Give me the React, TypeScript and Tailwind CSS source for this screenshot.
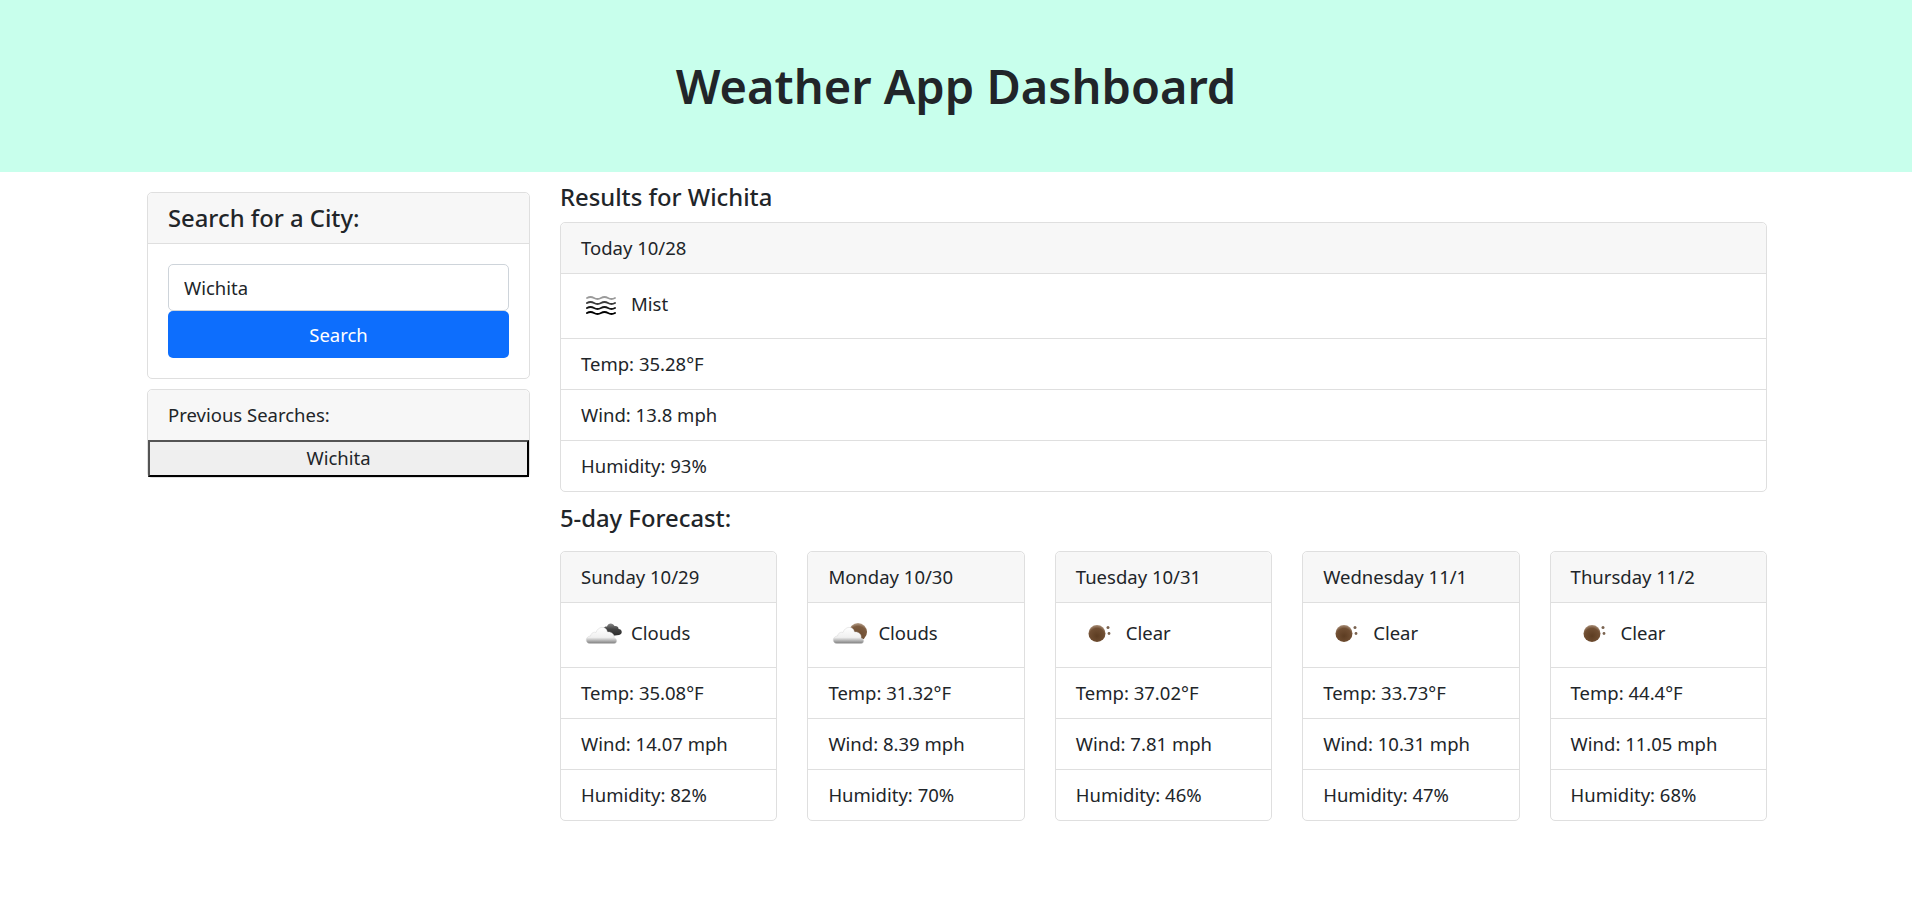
import { useId } from 'react';

interface DayWeather {
  label: string;
  icon: 'mist' | 'darkClouds' | 'sunClouds' | 'clear';
  description: string;
  temp: string;
  wind: string;
  humidity: string;
}

const TODAY: DayWeather = {
  label: 'Today 10/28',
  icon: 'mist',
  description: 'Mist',
  temp: '35.28',
  wind: '13.8',
  humidity: '93',
};

const FORECAST: DayWeather[] = [
  { label: 'Sunday 10/29', icon: 'darkClouds', description: 'Clouds', temp: '35.08', wind: '14.07', humidity: '82' },
  { label: 'Monday 10/30', icon: 'sunClouds', description: 'Clouds', temp: '31.32', wind: '8.39', humidity: '70' },
  { label: 'Tuesday 10/31', icon: 'clear', description: 'Clear', temp: '37.02', wind: '7.81', humidity: '46' },
  { label: 'Wednesday 11/1', icon: 'clear', description: 'Clear', temp: '33.73', wind: '10.31', humidity: '47' },
  { label: 'Thursday 11/2', icon: 'clear', description: 'Clear', temp: '44.4', wind: '11.05', humidity: '68' },
];

const CLOUD_PATH = 'M9 30.5 C4 30.5 4 23.5 9.5 23 C10 20 13 18.5 15 19.5 C17 13 25 12.5 26.5 19 C30 18.5 34 21 33 25 C36.5 25.5 36.5 30.5 33 30.5 Z';

function MistIcon() {
  return (
    <svg viewBox="0 0 50 44" className="h-[44px] w-[50px] shrink-0" fill="none" strokeLinecap="round">
      <path d="M6 14 q3.5 -2 7 0 t7 0 t7 0 t7 0" stroke="#9a9a9a" strokeWidth="1.8" />
      <path d="M6 19 q3.5 -2 7 0 t7 0 t7 0 t7 0" stroke="#3c3c3c" strokeWidth="2" />
      <path d="M6 24 q3.5 -2 7 0 t7 0 t7 0 t7 0" stroke="#141414" strokeWidth="2" />
      <path d="M6 29 q3.5 -2 7 0 t7 0 t7 0 t7 0" stroke="#000" strokeWidth="2" />
    </svg>
  );
}

function CloudShape({ id }: { id: string }) {
  return (
    <>
      <linearGradient id={id} x1="0" y1="0" x2="0" y2="1">
        <stop offset="0" stopColor="#ffffff" />
        <stop offset="0.62" stopColor="#f0f0f0" />
        <stop offset="1" stopColor="#7e7e7e" />
      </linearGradient>
      <path d={CLOUD_PATH} fill={`url(#${id})`} stroke="#c9c9c9" strokeWidth="0.4" />
    </>
  );
}

function DarkCloudsIcon() {
  const cloudId = useId();
  const darkId = useId();
  return (
    <svg viewBox="0 0 50 44" className="h-[44px] w-[50px] shrink-0">
      <linearGradient id={darkId} x1="0" y1="0" x2="0" y2="1">
        <stop offset="0" stopColor="#8a8a8a" />
        <stop offset="0.45" stopColor="#444444" />
        <stop offset="1" stopColor="#2a2a2a" />
      </linearGradient>
      <path d="M22 20 C20 15 24 13 26 13.5 C27 9.5 32 9.5 33.5 13 C36 12.5 38 14 37.5 16 C41.5 16 42 21.5 38 22 L30 23 Z" fill={`url(#${darkId})`} />
      <CloudShape id={cloudId} />
    </svg>
  );
}

function SunCloudsIcon() {
  const cloudId = useId();
  const sunId = useId();
  return (
    <svg viewBox="0 0 50 44" className="h-[44px] w-[50px] shrink-0">
      <radialGradient id={sunId} cx="0.5" cy="0.75" r="0.8">
        <stop offset="0" stopColor="#6a4a2e" />
        <stop offset="0.7" stopColor="#7d5c40" />
        <stop offset="1" stopColor="#c9b6a4" />
      </radialGradient>
      <circle cx="30" cy="19" r="9" fill={`url(#${sunId})`} />
      <CloudShape id={cloudId} />
    </svg>
  );
}

function ClearIcon() {
  const id = useId();
  return (
    <svg viewBox="0 0 50 44" className="h-[44px] w-[50px] shrink-0">
      <radialGradient id={id} cx="0.5" cy="0.65" r="0.7">
        <stop offset="0" stopColor="#5d3d22" />
        <stop offset="0.65" stopColor="#714f33" />
        <stop offset="1" stopColor="#b9a18c" />
      </radialGradient>
      <circle cx="21" cy="20.5" r="8.5" fill={`url(#${id})`} />
      <circle cx="32" cy="14.5" r="1.5" fill="#7a6350" />
      <circle cx="33" cy="20.5" r="1.4" fill="#7a6350" />
    </svg>
  );
}

function WeatherIcon({ icon }: { icon: DayWeather['icon'] }) {
  if (icon === 'mist') return <MistIcon />;
  if (icon === 'darkClouds') return <DarkCloudsIcon />;
  if (icon === 'sunClouds') return <SunCloudsIcon />;
  return <ClearIcon />;
}

function WeatherCard({ day }: { day: DayWeather }) {
  const row = 'border-t border-[#dfdfdf] px-5 py-[10px] leading-[30px]';
  return (
    <div className="rounded-[5px] border border-[#dfdfdf] bg-white">
      <div className="rounded-t-[5px] bg-[#f7f7f7] px-5 py-[10px] leading-[30px]">{day.label}</div>
      <div className="flex items-center border-t border-[#dfdfdf] px-5 py-[10px]">
        <WeatherIcon icon={day.icon} />
        <span className="pb-[5px]">{day.description}</span>
      </div>
      <div className={row}>Temp: {day.temp}°F</div>
      <div className={row}>Wind: {day.wind} mph</div>
      <div className={row}>Humidity: {day.humidity}%</div>
    </div>
  );
}

export default function App() {
  return (
    <div className="min-h-[915px] bg-white font-['Noto_Sans','Open_Sans',sans-serif] text-[18.5px] text-[#212529]">
      <header className="flex h-[172px] items-center justify-center bg-[#c8ffec]">
        <h1 className="text-[47px] leading-[60px] font-semibold">Weather App Dashboard</h1>
      </header>

      <main className="mr-[145px] ml-[147px] flex gap-[30px]">
        {/* Search column */}
        <aside className="mt-5 w-[383px] shrink-0">
          <div className="rounded-[5px] border border-[#dfdfdf]">
            <div className="rounded-t-[5px] border-b border-[#dfdfdf] bg-[#f7f7f7] px-5 py-[10px] text-[23.8px] leading-[30px] font-medium">
              Search for a City:
            </div>
            <div className="p-5">
              <input
                readOnly
                value="Wichita"
                className="block h-[47px] w-full rounded-[5px] border border-[#ced4da] px-[15px] outline-none"
              />
              <button className="block h-[47px] w-full rounded-[5px] bg-[#0d6efd] text-white">Search</button>
            </div>
          </div>

          <div className="mt-[10px] rounded-[5px] border border-[#dfdfdf]">
            <div className="rounded-t-[5px] bg-[#f7f7f7] px-5 py-[10px] leading-[30px]">Previous Searches:</div>
            <button className="block h-[37px] w-full border-2 border-black bg-[#efefef] leading-none [border-style:outset]">
              Wichita
            </button>
          </div>
        </aside>

        {/* Results column */}
        <section className="min-w-0 flex-1">
          <h4 className="pt-2 pb-[7px] text-[23.8px] leading-[35px] font-medium">Results for Wichita</h4>
          <WeatherCard day={TODAY} />
          <h4 className="mt-[8px] mb-[15px] text-[23.8px] leading-[36px] font-medium">5-day Forecast:</h4>
          <div className="grid grid-cols-5 gap-[30px]">
            {FORECAST.map(day => (
              <WeatherCard key={day.label} day={day} />
            ))}
          </div>
        </section>
      </main>
    </div>
  );
}
